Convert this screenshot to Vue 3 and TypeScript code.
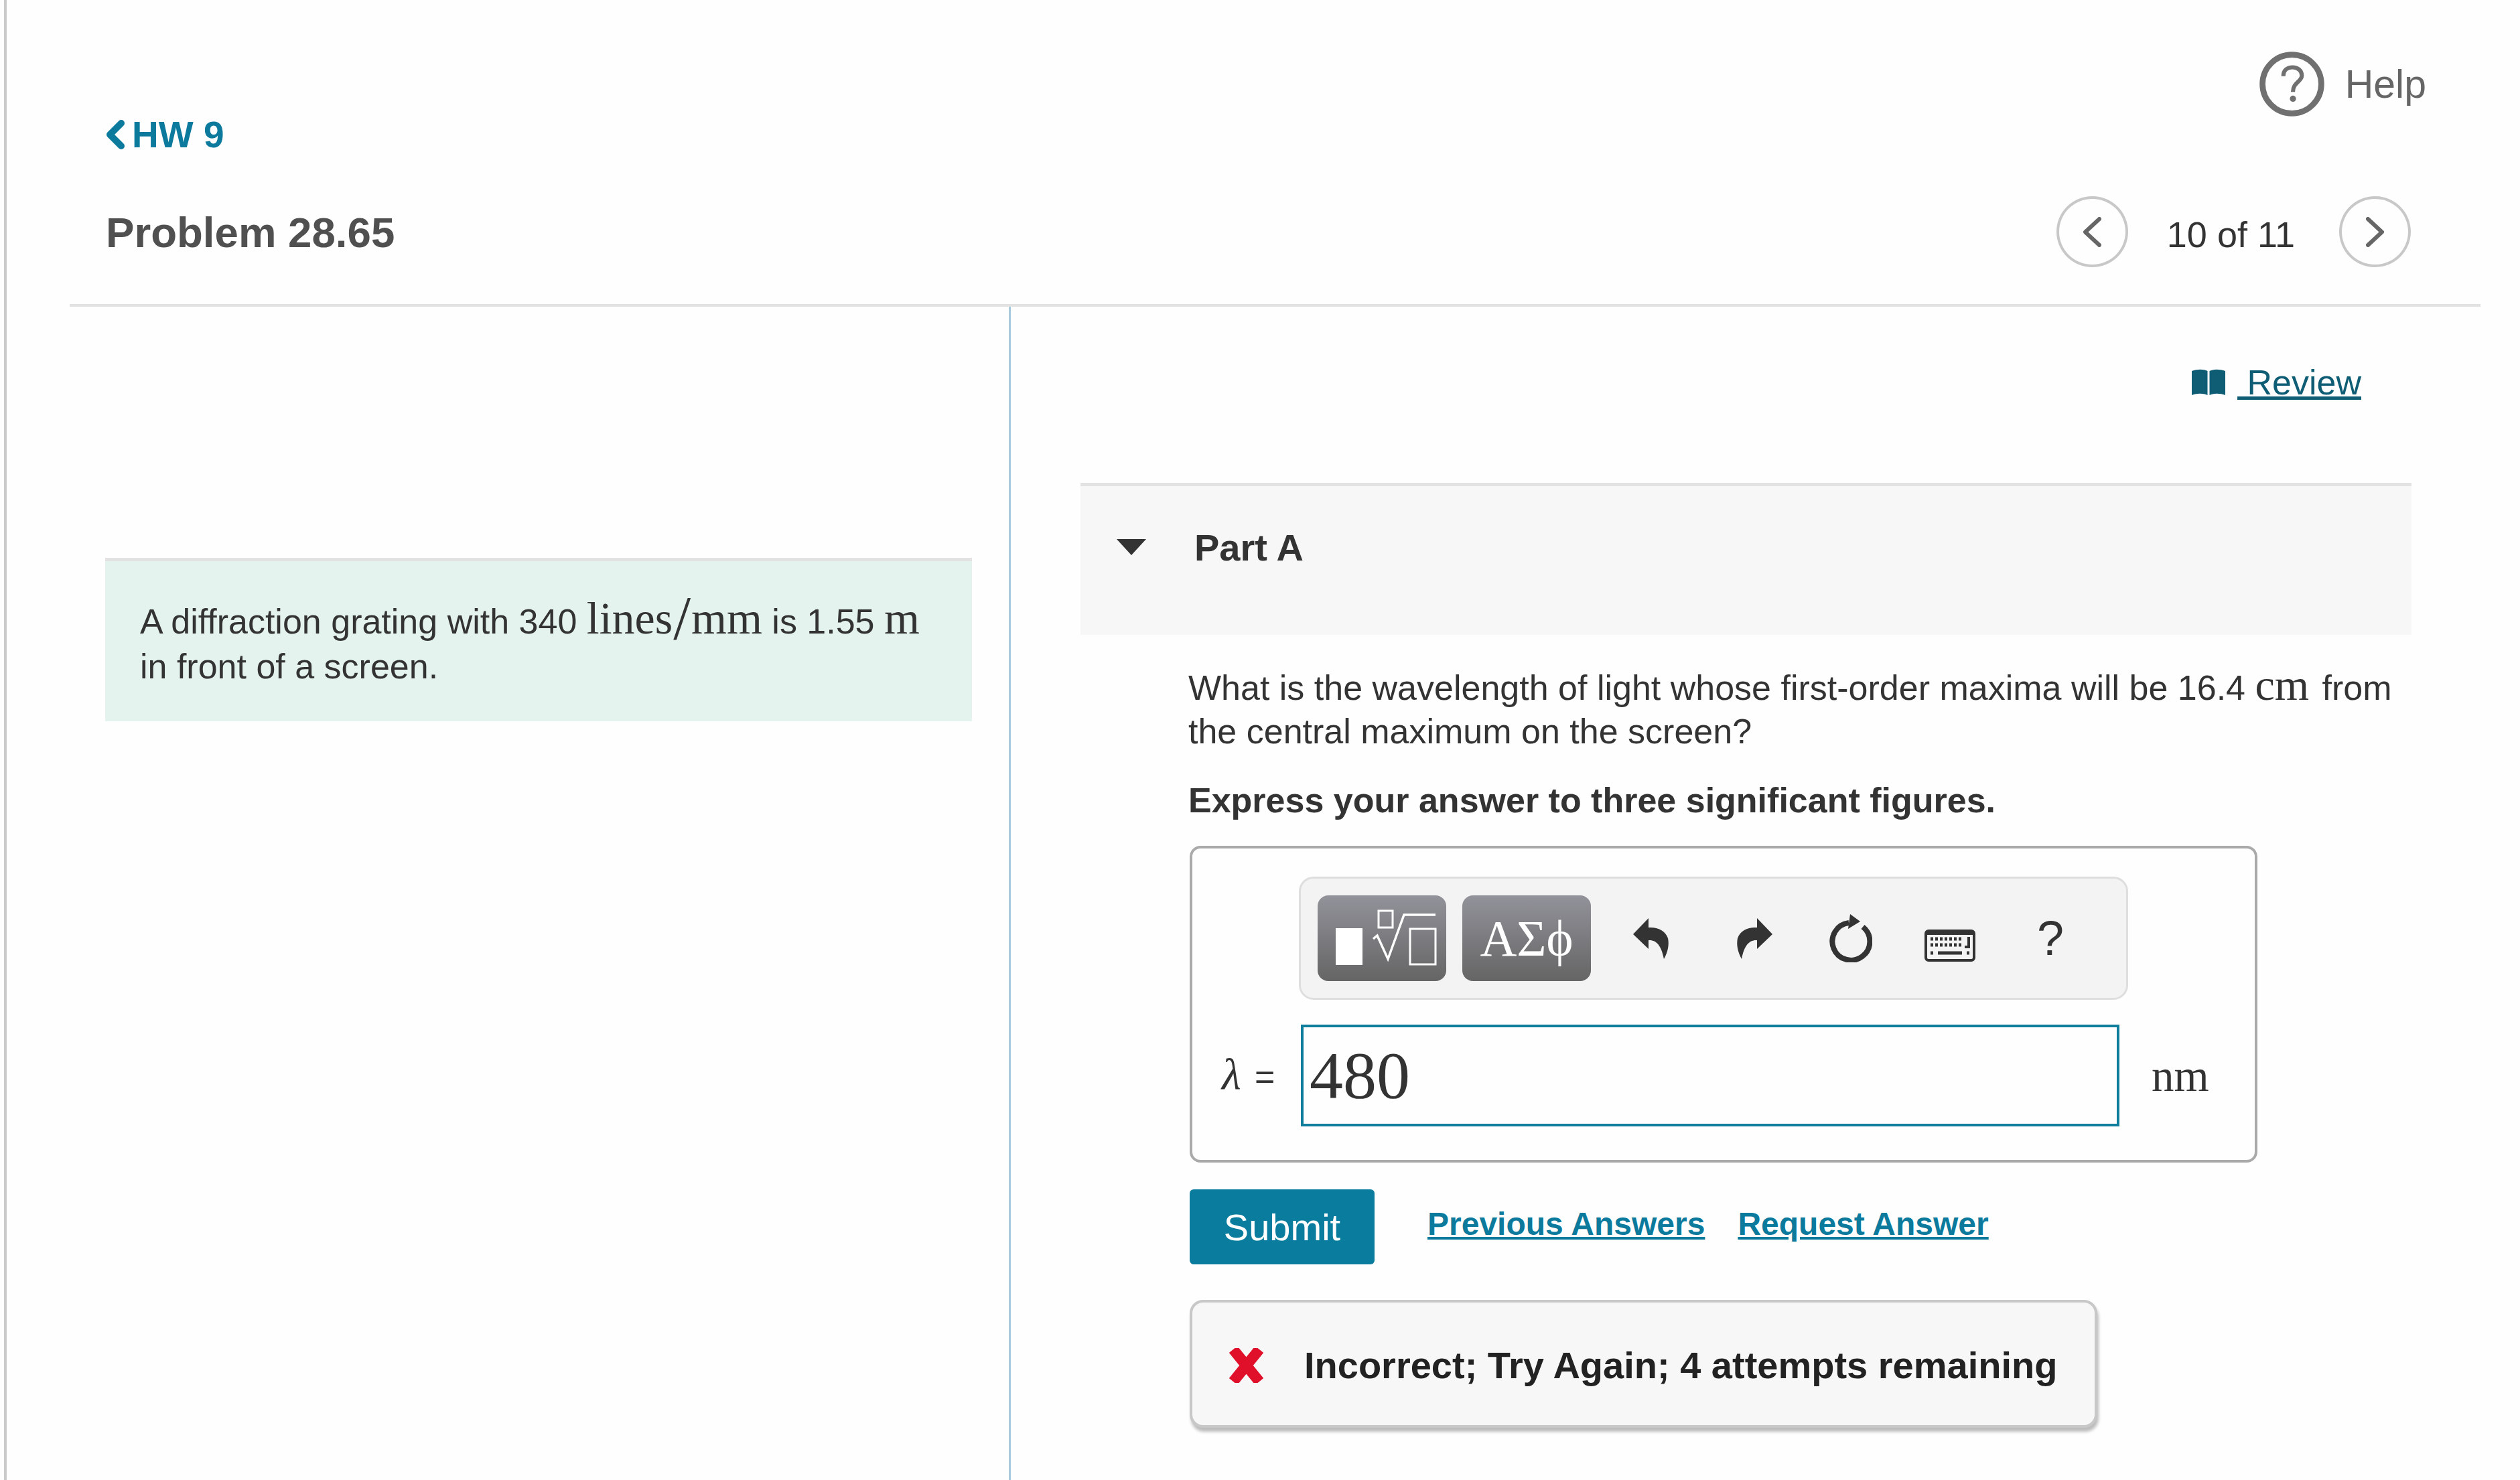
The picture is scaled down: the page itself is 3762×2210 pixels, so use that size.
<script setup lang="ts">
const keyRows: number[] = [14, 23]
</script>

<template>
  <div class="page">
    <div class="window">
      <header class="header">
        <div class="help-row">
          <a class="help">
            <svg class="help-icon" viewBox="0 0 95 95" width="97" height="97">
              <circle cx="47.5" cy="47.5" r="43" fill="none" stroke="#707070" stroke-width="8.5" />
              <path d="M35 36C35 27 41 23 48.5 23C56 23 62 28 62 35C62 44 49 45 49 59" fill="none" stroke="#707070" stroke-width="6" />
              <circle cx="49" cy="69" r="4.5" fill="#707070" />
            </svg>
            <span>Help</span>
          </a>
        </div>
        <a class="back">
          <svg viewBox="0 0 28 44" width="28" height="44">
            <polyline points="23,5 6,22 23,39" fill="none" stroke="#0b7a9c" stroke-width="10" stroke-linecap="round" stroke-linejoin="round" />
          </svg>
          <span>HW 9</span>
        </a>
        <div class="title-row">
          <h1 class="title">Problem 28.65</h1>
          <nav class="pager">
            <button class="circle">
              <svg viewBox="0 0 27 45" width="27" height="45">
                <polyline points="24,3 3,22.5 24,42" fill="none" stroke="#666" stroke-width="6" stroke-linecap="round" stroke-linejoin="round" />
              </svg>
            </button>
            <span class="counter">10 of 11</span>
            <button class="circle">
              <svg viewBox="0 0 27 45" width="27" height="45">
                <polyline points="3,3 24,22.5 3,42" fill="none" stroke="#666" stroke-width="6" stroke-linecap="round" stroke-linejoin="round" />
              </svg>
            </button>
          </nav>
        </div>
      </header>

      <main class="columns">
        <section class="left">
          <div class="intro">
            A diffraction grating with 340 <span class="math wide">lines<span class="slash">/</span>mm</span> is 1.55 <span class="math wide">m</span>
            in front of a screen.
          </div>
        </section>

        <section class="right">
          <div class="review-row">
            <a class="review">
              <svg viewBox="0 0 50 40" width="50" height="40">
                <path d="M0 3C8 0 18 0 23.5 3V39C17 36 8 36 0 39Z" fill="#0f5d75" />
                <path d="M50 3C42 0 32 0 26.5 3V39C33 36 42 36 50 39Z" fill="#0f5d75" />
              </svg>
              <span class="review-text">&nbsp;Review</span>
            </a>
          </div>

          <div class="part-head">
            <svg viewBox="0 0 44 24" width="44" height="24">
              <polygon points="0,0 44,0 22,24" fill="#333" />
            </svg>
            <h2 class="part-title">Part A</h2>
          </div>

          <div class="part-body">
            <p class="question">
              What is the wavelength of light whose first-order maxima will be 16.4 <span class="math cm">cm</span> from the central maximum on the screen?
            </p>
            <p class="instruction">Express your answer to three significant figures.</p>

            <div class="answer-box">
              <div class="toolbar">
                <div class="tool-btn">
                  <svg viewBox="0 0 192 128" width="192" height="128">
                    <rect x="27" y="49" width="40" height="55" fill="#fff" />
                    <rect x="91" y="23" width="21" height="25" fill="none" stroke="#fff" stroke-width="3" />
                    <path d="M83 65L89 60L105 95L129 29H176" fill="none" stroke="#fff" stroke-width="3.5" />
                    <rect x="138" y="50" width="38" height="53" fill="none" stroke="#fff" stroke-width="3" />
                  </svg>
                </div>
                <div class="tool-btn greek">ΑΣϕ</div>
                <svg class="i-undo" viewBox="0 0 54 61" width="54" height="61">
                  <path d="M23 0L0 24L23 46V33C34 32 42 40 46 61C52 50 54 40 52 30C48 18 36 13 23 14Z" fill="#333" />
                </svg>
                <svg class="i-redo" viewBox="0 0 54 61" width="54" height="61">
                  <path d="M31 0L54 24L31 46V33C20 32 12 40 8 61C2 50 0 40 2 30C6 18 18 13 31 14Z" fill="#333" />
                </svg>
                <svg class="i-reload" viewBox="0 0 64 72" width="64" height="72">
                  <path d="M29 13A28 28 0 1 0 50 19" fill="none" stroke="#333" stroke-width="8" />
                  <polygon points="31,0 46,11 28,22" fill="#333" />
                </svg>
                <svg class="i-keys" viewBox="0 0 76 48" width="76" height="48">
                  <rect x="2" y="2" width="72" height="44" rx="4" fill="#f3f3f3" stroke="#333" stroke-width="4" />
                  <rect x="2" y="2" width="72" height="6" fill="#333" />
                  <line v-for="y in keyRows" :key="y" x1="9" :y1="y" x2="58" :y2="y" stroke="#333" stroke-width="5" stroke-dasharray="4 3" />
                  <path d="M66 11V26H60" fill="none" stroke="#333" stroke-width="4" />
                  <path d="M9 35H13M20 35H56M63 35H67" stroke="#333" stroke-width="5" />
                </svg>
                <span class="i-help">?</span>
              </div>

              <div class="answer-row">
                <span class="label"><i class="lambda">λ</i> <span class="eq">=</span></span>
                <div class="field">480</div>
                <span class="unit">nm</span>
              </div>
            </div>

            <div class="actions">
              <button class="submit">Submit</button>
              <a class="link first">Previous Answers</a>
              <a class="link">Request Answer</a>
            </div>

            <div class="feedback">
              <svg viewBox="0 0 53 52" width="53" height="52">
                <path d="M7 2L46 50M46 2L7 50" stroke="#e0102a" stroke-width="16" fill="none" />
              </svg>
              <span>Incorrect; Try Again; 4 attempts remaining</span>
            </div>
          </div>
        </section>
      </main>
    </div>
  </div>
</template>

<style>
html, body { margin: 0; padding: 0; background: #fefefe; }
</style>

<style scoped>
.page {
  width: 3762px;
  height: 2210px;
  box-sizing: border-box;
  padding-left: 6px;
  overflow: hidden;
  background: #fefefe;
  font-family: "Liberation Sans", Arial, sans-serif;
  color: #333;
  display: flex;
}
.window {
  flex: 1;
  min-width: 0;
  border-left: 4px solid #cacaca;
  display: flex;
  flex-direction: column;
}
.header {
  margin-left: 94px;
  width: 3599px;
  box-sizing: border-box;
  padding: 77px 0 55px 54px;
  border-bottom: 4px solid #e2e2e2;
}
.help-row { display: flex; justify-content: flex-end; padding-right: 81px; }
.help { display: flex; align-items: center; gap: 31px; color: #666; font-size: 59px; }
.help-icon { display: block; }
.back {
  display: flex;
  align-items: center;
  gap: 11px;
  height: 56px;
  margin-top: -1px;
  color: #0b7a9c;
  font-size: 55px;
  font-weight: 700;
}
.title-row {
  margin-top: 64px;
  height: 106px;
  display: flex;
  align-items: center;
  justify-content: space-between;
  padding-right: 104px;
}
.title { margin: 0; font-size: 63.6px; font-weight: 700; color: #505050; }
.pager { display: flex; align-items: center; }
.circle {
  width: 107px;
  height: 106px;
  box-sizing: border-box;
  padding: 0;
  border: 4px solid #c8c8c8;
  border-radius: 50%;
  background: transparent;
  display: flex;
  align-items: center;
  justify-content: center;
}
.counter { margin: 0 66px 0 58px; padding-top: 8px; font-size: 54px; color: #333; }
.columns { flex: 1; display: flex; min-height: 0; }
.left {
  width: 1499px;
  box-sizing: border-box;
  padding: 375px 55px 0 147px;
  border-right: 3px solid #a9c9dc;
}
.intro {
  background: #e4f3ee;
  border-top: 5px solid #e2e2e2;
  padding: 57px 50px 48px 52px;
  font-size: 52px;
  line-height: 67px;
}
.math { font-family: "Liberation Serif", serif; font-size: 66px; line-height: 0; }
.wide { font-size: 68px; }
.slash { font-size: 93px; line-height: 0; font-weight: 400; vertical-align: -8px; margin: 0 1px; }
.cm { margin-right: 5px; }
.right { flex: 1; min-width: 0; padding-left: 104px; }
.review-row {
  width: 1987px;
  box-sizing: border-box;
  padding: 83px 75px 0 0;
  margin-bottom: 120px;
  display: flex;
  justify-content: flex-end;
}
.review { display: flex; align-items: center; gap: 18px; height: 60px; font-size: 52px; color: #0f5d75; }
.review-text { text-decoration: underline; }
.part-head {
  width: 1987px;
  box-sizing: border-box;
  height: 227px;
  border-top: 5px solid #e2e2e2;
  background: #f7f7f7;
  padding: 60px 0 0 54px;
  display: flex;
  align-items: flex-start;
  gap: 72px;
}
.part-head svg { margin-top: 19px; }
.part-title { margin: 0; font-size: 56px; line-height: 64px; font-weight: 700; color: #333; }
.part-body { padding-left: 163px; }
.question {
  margin: 47px 0 0 -2px;
  width: 1840px;
  font-size: 52px;
  line-height: 65px;
}
.instruction {
  margin: 38px 0 0 -2px;
  font-size: 52px;
  line-height: 65px;
  font-weight: 700;
}
.answer-box {
  margin-top: 35px;
  width: 1594px;
  height: 473px;
  box-sizing: border-box;
  border: 4px solid #aaa;
  border-radius: 16px;
  padding: 42px 0 0 159px;
}
.toolbar {
  width: 1238px;
  height: 184px;
  box-sizing: border-box;
  background: #f3f3f3;
  border: 3px solid #dedede;
  border-radius: 22px;
  padding-left: 25px;
  display: flex;
  align-items: center;
}
.tool-btn {
  width: 192px;
  height: 128px;
  border-radius: 16px;
  background: linear-gradient(#92929a, #656565);
  display: flex;
  align-items: center;
  justify-content: center;
  color: #fff;
}
.tool-btn svg { display: block; }
.greek { margin-left: 24px; font-family: "Liberation Serif", serif; font-size: 76px; }
.i-undo { margin-left: 63px; }
.i-redo { margin-left: 100px; }
.i-reload { margin-left: 85px; }
.i-keys { margin-left: 78px; margin-top: 22px; }
.i-help { margin-left: 92px; font-size: 72px; line-height: 1; color: #333; }
.answer-row {
  margin-top: 37px;
  margin-left: -115px;
  display: flex;
  align-items: center;
  height: 152px;
}
.label { width: 118px; font-family: "Liberation Serif", serif; font-size: 66px; line-height: 62px; white-space: nowrap; }
.lambda { font-style: italic; margin-right: 4px; }
.eq { font-family: "Liberation Sans", sans-serif; font-size: 52px; }
.field {
  width: 1222px;
  height: 152px;
  box-sizing: border-box;
  border: 4px solid #0f7d9c;
  padding-left: 9px;
  font-family: "Liberation Serif", serif;
  font-size: 100px;
  line-height: 144px;
  color: #333;
}
.unit { margin-left: 48px; font-family: "Liberation Serif", serif; font-size: 67px; line-height: 65px; }
.actions { margin-top: 40px; display: flex; align-items: flex-start; }
.submit {
  width: 276px;
  height: 112px;
  border: 0;
  border-radius: 6px;
  background: #0a7c9e;
  color: #fff;
  font-family: "Liberation Sans", sans-serif;
  font-size: 56px;
}
.link {
  margin: 24px 0 0 49px;
  font-size: 48px;
  line-height: 56px;
  font-weight: 700;
  color: #0b7a9c;
  text-decoration: underline;
}
.link.first { margin-left: 79px; }
.feedback {
  margin-top: 53px;
  width: 1355px;
  height: 191px;
  box-sizing: border-box;
  background: #f7f7f7;
  border: 4px solid #c8c8c8;
  border-radius: 20px;
  box-shadow: 2px 6px 4px #bdbdbd;
  padding: 4px 0 0 54px;
  display: flex;
  align-items: center;
  gap: 60px;
  font-size: 56px;
  font-weight: 700;
  color: #222;
  white-space: nowrap;
}
</style>
